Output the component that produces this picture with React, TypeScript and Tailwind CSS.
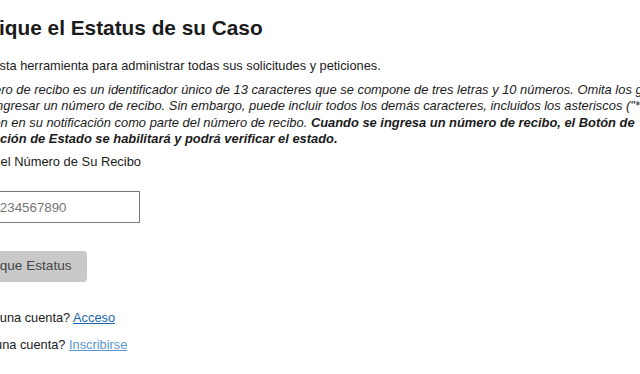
export default function App() {
  return (
    <div className="w-[640px] h-[374px] overflow-hidden bg-white text-[#1b1b1b] font-['Liberation_Sans',Arial,sans-serif]">
      <div className="-ml-[46px] w-[745px] pt-[16px]">
        <h1 className="text-[20.8px] leading-[23.5px] font-bold">Verifique el Estatus de su Caso</h1>
        <p className="mt-[18px] text-[12.8px] leading-[16.3px]">
          Utilice esta herramienta para administrar todas sus solicitudes y peticiones.
        </p>
        <p className="mt-[8px] text-[12.9px] leading-[16.5px] italic">
          El número de recibo es un identificador único de 13 caracteres que se compone de tres letras y 10 números. Omita los guiones <span className="whitespace-nowrap">("-")</span> al ingresar un número de recibo. Sin embargo, puede incluir todos los demás caracteres, incluidos los asteriscos <span className="whitespace-nowrap">("*"),</span> si aparecen en su notificación como parte del número de recibo.{" "}
          <span className="font-bold">
            Cuando se ingresa un número de recibo, el Botón de Verificación de Estado se habilitará y podrá verificar el estado.
          </span>
        </p>
        <label className="mt-[6px] block text-[12.9px] leading-[16.3px]">Ingrese el Número de Su Recibo</label>
        <input
          className="mt-[21px] block w-[186px] h-[32px] border border-[#767676] px-[10px] text-[13.33px] placeholder:text-[#757575] outline-none"
          placeholder="EAC1234567890"
        />
        <button className="mt-[28px] block h-[31px] px-[15.5px] bg-[#c9c9c9] rounded-[4px] text-[13.6px] text-[#454545]">
          Verifique Estatus
        </button>
        <div className="-ml-[18px] mt-[28px] text-[12.8px] leading-[16.3px] flex flex-col gap-[11px]">
          <p>
            ¿Ya tienes una cuenta? <a className="text-[#1a65ad] underline" href="#">Acceso</a>
          </p>
          <p>
            ¿No tiene una cuenta? <a className="text-[#5b97d0] underline" href="#">Inscribirse</a>
          </p>
        </div>
      </div>
    </div>
  );
}
